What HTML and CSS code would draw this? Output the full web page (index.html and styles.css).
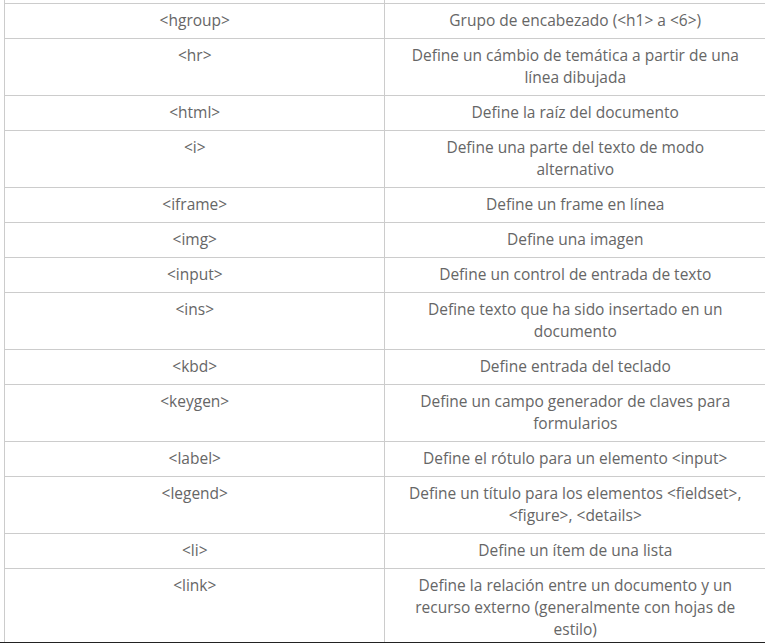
FILE: index.html
```html
<!DOCTYPE html>
<html lang="es">
<head>
<meta charset="utf-8">
<title>Etiquetas HTML</title>
<link rel="stylesheet" href="styles.css">
</head>
<body>
<div class="viewport">
<table class="tags">
<tbody>
<tr class="spacer"><td></td><td></td></tr>
<tr><td>&lt;hgroup&gt;</td><td>Grupo de encabezado (&lt;h1&gt; a &lt;6&gt;)</td></tr>
<tr><td>&lt;hr&gt;</td><td>Define un cámbio de temática a partir de una línea dibujada</td></tr>
<tr><td>&lt;html&gt;</td><td>Define la raíz del documento</td></tr>
<tr><td>&lt;i&gt;</td><td>Define una parte del texto de modo alternativo</td></tr>
<tr><td>&lt;iframe&gt;</td><td>Define un frame en línea</td></tr>
<tr><td>&lt;img&gt;</td><td>Define una imagen</td></tr>
<tr><td>&lt;input&gt;</td><td>Define un control de entrada de texto</td></tr>
<tr><td>&lt;ins&gt;</td><td>Define texto que ha sido insertado en un documento</td></tr>
<tr><td>&lt;kbd&gt;</td><td>Define entrada del teclado</td></tr>
<tr><td>&lt;keygen&gt;</td><td>Define un campo generador de claves para formularios</td></tr>
<tr><td>&lt;label&gt;</td><td>Define el rótulo para un elemento &lt;input&gt;</td></tr>
<tr><td>&lt;legend&gt;</td><td>Define un título para los elementos &lt;fieldset&gt;, &lt;figure&gt;, &lt;details&gt;</td></tr>
<tr><td>&lt;li&gt;</td><td>Define un ítem de una lista</td></tr>
<tr><td>&lt;link&gt;</td><td>Define la relación entre un documento y un recurso externo (generalmente con hojas de estilo)</td></tr>
</tbody>
</table>
</div>
</body>
</html>
```

FILE: styles.css
```css
html, body {
  margin: 0;
  padding: 0;
  background: #ffffff;
}

.viewport {
  height: 642px;
  overflow: hidden;
  border-bottom: 1px solid #222222;
  padding-left: 4px;
}

.tags {
  border-collapse: collapse;
  width: 761px;
  table-layout: fixed;
  font-family: "Open Sans", "Noto Sans", sans-serif;
  font-size: 15.5px;
  line-height: 22px;
  color: #666666;
}

.tags td {
  width: 50%;
  border: 1px solid #cccccc;
  padding: 5px 22px 7px;
  text-align: center;
  vertical-align: top;
}

.tags td:last-child {
  border-right: none;
}

.tags .spacer td {
  padding: 0;
  height: 3px;
  border-top: none;
}
```
